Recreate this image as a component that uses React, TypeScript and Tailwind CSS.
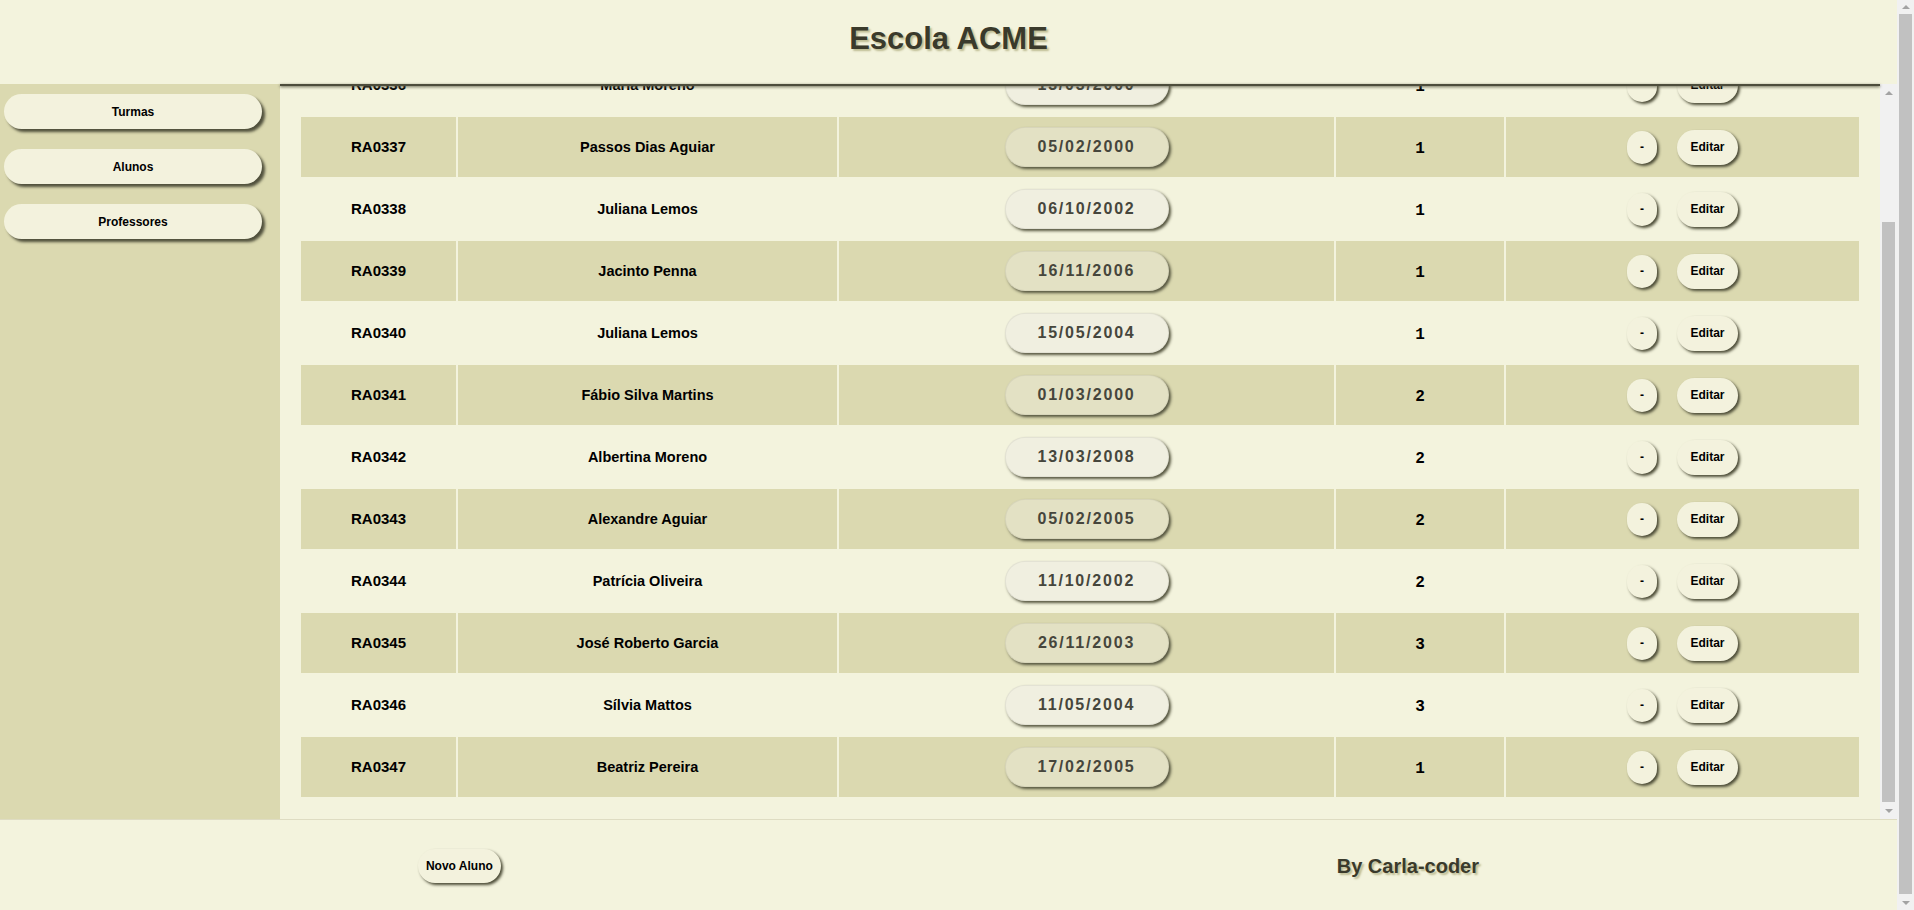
import React, { useEffect, useRef } from 'react';

type Aluno = {
  ra: string;
  nome: string;
  nascimento: string;
  turma: number;
};

const alunos: Aluno[] = [
  { ra: 'RA0335', nome: 'Carlos Mendes', nascimento: '22/08/2001', turma: 1 },
  { ra: 'RA0336', nome: 'Maria Moreno', nascimento: '13/03/2000', turma: 1 },
  { ra: 'RA0337', nome: 'Passos Dias Aguiar', nascimento: '05/02/2000', turma: 1 },
  { ra: 'RA0338', nome: 'Juliana Lemos', nascimento: '06/10/2002', turma: 1 },
  { ra: 'RA0339', nome: 'Jacinto Penna', nascimento: '16/11/2006', turma: 1 },
  { ra: 'RA0340', nome: 'Juliana Lemos', nascimento: '15/05/2004', turma: 1 },
  { ra: 'RA0341', nome: 'Fábio Silva Martins', nascimento: '01/03/2000', turma: 2 },
  { ra: 'RA0342', nome: 'Albertina Moreno', nascimento: '13/03/2008', turma: 2 },
  { ra: 'RA0343', nome: 'Alexandre Aguiar', nascimento: '05/02/2005', turma: 2 },
  { ra: 'RA0344', nome: 'Patrícia Oliveira', nascimento: '11/10/2002', turma: 2 },
  { ra: 'RA0345', nome: 'José Roberto Garcia', nascimento: '26/11/2003', turma: 3 },
  { ra: 'RA0346', nome: 'Sílvia Mattos', nascimento: '11/05/2004', turma: 3 },
  { ra: 'RA0347', nome: 'Beatriz Pereira', nascimento: '17/02/2005', turma: 1 },
];

const menu = ['Turmas', 'Alunos', 'Professores'];

const ScrollBar: React.FC<{ arrow: string; thumbTop: string; thumbHeight: string }> = ({
  arrow,
  thumbTop,
  thumbHeight,
}) => (
  <div className="w-[17px] shrink-0 h-full flex flex-col bg-[#f1f1f1]">
    <div className={`${arrow} shrink-0 flex items-center justify-center`}>
      <div className="w-0 h-0 border-x-[4px] border-x-transparent border-b-[4px] border-b-[#a3a3a3]" />
    </div>
    <div className="flex-1 flex flex-col px-[2px]">
      <div className={`${thumbTop} ${thumbHeight} bg-[#c1c1c1]`} />
    </div>
    <div className={`${arrow} shrink-0 flex items-center justify-center`}>
      <div className="w-0 h-0 border-x-[4px] border-x-transparent border-t-[4px] border-t-[#a3a3a3]" />
    </div>
  </div>
);

const App: React.FC = () => {
  const listRef = useRef<HTMLDivElement>(null);

  // a lista abre rolada até o fim
  useEffect(() => {
    if (listRef.current) {
      listRef.current.scrollTop = listRef.current.scrollHeight;
    }
  }, []);

  return (
    <div className="h-[910px] flex overflow-hidden bg-[#f3f3dd] text-black font-['Liberation_Sans',Arial,sans-serif]">
      <div className="flex-1 min-w-0 flex flex-col">
        <header className="h-[84px] shrink-0 flex justify-center pt-[19px]">
          <h1 className="text-[31px] leading-[40px] font-bold text-[#3a3a2b] [text-shadow:2px_2px_2px_#bdbb92]">
            Escola ACME
          </h1>
        </header>

        <div className="flex h-[735px] shrink-0">
          <nav className="w-[280px] shrink-0 bg-[#dbd9b0] pt-[10px] pl-[4px] pr-[18px] flex flex-col gap-[20px]">
            {menu.map((item) => (
              <button
                key={item}
                className="h-[35px] w-full rounded-full bg-[#f3f2dd] text-[12px] font-bold shadow-[3px_3px_3px_#4f4f3b]"
              >
                {item}
              </button>
            ))}
          </nav>

          <div className="relative flex-1 min-w-0 flex">
            <div className="absolute top-0 left-0 right-[17px] h-[2px] bg-[#4d4d3c] shadow-[0_1px_3px_#5b5b47] z-10" />
            <div ref={listRef} className="flex-1 min-w-0 h-full overflow-y-auto px-[19px] pt-[19px] pb-[20px]">
              <table className="w-full table-fixed border-separate border-spacing-[2px]">
                <colgroup>
                  <col className="w-[155px]" />
                  <col className="w-[379px]" />
                  <col className="w-[495px]" />
                  <col className="w-[168px]" />
                  <col />
                </colgroup>
                <thead>
                  <tr className="h-[40px] text-[15px] font-bold">
                    <th>RA</th>
                    <th>Nome</th>
                    <th>Data de Nascimento</th>
                    <th>Turma</th>
                    <th>Ações</th>
                  </tr>
                </thead>
                <tbody>
                  {alunos.map((a, i) => {
                    const tinted = i % 2 === 0;
                    return (
                      <tr key={a.ra} className={tinted ? 'h-[60px] bg-[#dbd9b0]' : 'h-[60px]'}>
                        <td className="text-center text-[15px] font-bold">{a.ra}</td>
                        <td className="text-center pt-[2px] text-[14.5px] font-bold">{a.nome}</td>
                        <td>
                          <div className="flex justify-center">
                            <span
                              className={
                                tinted
                                  ? 'w-[164px] h-[40px] flex items-center justify-center rounded-full bg-[#e3e1c4] border border-black/5 shadow-[2px_2px_3px_#55553f] text-[16px] font-bold tracking-[1.8px] text-[#46463c]'
                                  : 'w-[164px] h-[40px] flex items-center justify-center rounded-full bg-[#f0efe0] border border-black/5 shadow-[2px_2px_3px_#55553f] text-[16px] font-bold tracking-[1.8px] text-[#46463c]'
                              }
                            >
                              {a.nascimento}
                            </span>
                          </div>
                        </td>
                        <td className="text-center pt-[3px] text-[16px] font-bold font-['Liberation_Mono',monospace]">
                          {a.turma}
                        </td>
                        <td>
                          <div className="flex items-center justify-center gap-[20px]">
                            <button className="w-[30px] h-[33px] rounded-full bg-[#f3f2dd] text-[12px] font-bold shadow-[2px_2px_3px_#4b4b36]">
                              -
                            </button>
                            <button className="w-[61px] h-[35px] rounded-full bg-[#f3f2dd] text-[12px] font-bold shadow-[2px_2px_3px_#4b4b36]">
                              Editar
                            </button>
                          </div>
                        </td>
                      </tr>
                    );
                  })}
                </tbody>
              </table>
            </div>
            <ScrollBar arrow="h-[17px]" thumbTop="mt-[121px]" thumbHeight="h-[580px]" />
          </div>
        </div>

        <footer className="h-[92px] shrink-0 border-t border-[#dedcc2] flex items-center justify-around">
          <button className="h-[34px] px-[8px] rounded-full bg-[#f3f2dd] text-[12px] font-bold shadow-[2px_2px_3px_#4b4b36]">
            Novo Aluno
          </button>
          <p className="text-[20px] font-bold text-[#3a3a2b] [text-shadow:2px_2px_2px_#bdbb92]">By Carla-coder</p>
        </footer>
      </div>

      <ScrollBar arrow="h-[14px]" thumbTop="mt-0" thumbHeight="h-[880px]" />
    </div>
  );
};

export default App;
